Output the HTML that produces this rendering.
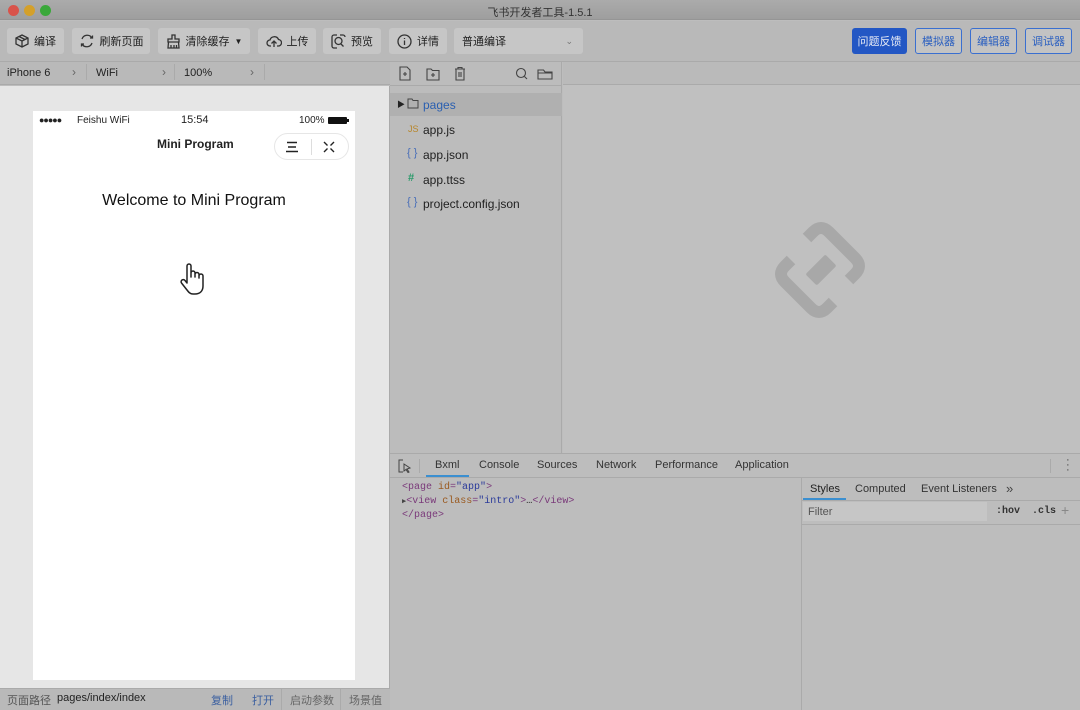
<!DOCTYPE html>
<html><head><meta charset="utf-8"><style>
*{box-sizing:border-box;margin:0;padding:0}
body{width:1080px;height:710px;overflow:hidden;background:#bdbdbd;font-family:"Liberation Sans","Noto Sans CJK SC",sans-serif;font-size:11px;color:#222;position:relative}
.a{position:absolute;white-space:nowrap}
.btn{position:absolute;top:28px;height:26px;background:#c6c6c6;border-radius:3px;display:flex;align-items:center;justify-content:center;padding:0 4px;gap:5px;font-size:11px;color:#222;white-space:nowrap}
.rb{position:absolute;top:28px;height:26px;border:1px solid #3a6fd0;border-radius:3px;color:#2a5fc0;background:#c3c3c3;font-size:11px;display:flex;align-items:center;justify-content:center;white-space:nowrap}
.ic{stroke:#333;fill:none;stroke-width:1.3;flex:none}
.tab{position:absolute;top:459px;font-size:11px;color:#333}
.file{position:absolute;left:408px;font-size:12px;color:#222}
</style></head><body>
<div class="a" style="left:0;top:0;width:1080px;height:20px;background:linear-gradient(#ababab,#9e9e9e);border-bottom:1px solid #959595"></div>
<div class="a" style="left:8px;top:5px;width:11px;height:11px;border-radius:50%;background:#d9534a"></div>
<div class="a" style="left:24px;top:5px;width:11px;height:11px;border-radius:50%;background:#d4a02a"></div>
<div class="a" style="left:40px;top:5px;width:11px;height:11px;border-radius:50%;background:#3aa83a"></div>
<div class="a" style="left:0;width:1080px;top:4px;text-align:center;font-size:11px;color:#333">飞书开发者工具-1.5.1</div>
<div class="a" style="left:0;top:21px;width:1080px;height:41px;background:#b9b9b9;border-bottom:1px solid #aaa"></div>
<div class="btn" style="left:7px;width:57px"><svg width="14" height="14" class="ic"><path d="M7 1L13 4V10L7 13L1 10V4Z M1 4L7 7L13 4 M7 7V13 M4 2.5L10 5.5"/></svg>编译</div>
<div class="btn" style="left:72px;width:78px"><svg width="16" height="16" class="ic"><path d="M3 6A5.5 5.5 0 0 1 13 5 M13 10A5.5 5.5 0 0 1 3 11 M11 5H13.5V2.5 M5 11H2.5V13.5"/></svg>刷新页面</div>
<div class="btn" style="left:158px;width:92px"><svg width="15" height="15" class="ic"><path d="M6 1H9V5H13V8H2V5H6Z M2.5 8L2 14H13L12.5 8 M5 11V14 M8 11V14 M10.5 11V14"/></svg>清除缓存 <span style="font-size:8px">▼</span></div>
<div class="btn" style="left:258px;width:58px"><svg width="16" height="14" class="ic"><path d="M5 12H4A3 3 0 0 1 4 6A4.5 4.5 0 0 1 12.5 5.5A3 3 0 0 1 12 12H11 M8 13V7 M5.5 9.5L8 7L10.5 9.5"/></svg>上传</div>
<div class="btn" style="left:323px;width:58px"><svg width="15" height="15" class="ic"><path d="M6 1H3A2 2 0 0 0 1 3V12A2 2 0 0 0 3 14H6 M9 1H12A2 2 0 0 1 14 3 M7.5 10.5A3.5 3.5 0 1 0 7.5 3.5A3.5 3.5 0 0 0 7.5 10.5 M10 10L12.5 12.5"/></svg>预览</div>
<div class="btn" style="left:389px;width:58px"><svg width="15" height="15" class="ic"><circle cx="7.5" cy="7.5" r="6.5"/><path d="M7.5 6.5V11 M7.5 4V5"/></svg>详情</div>
<div class="btn" style="left:454px;width:129px;justify-content:space-between;padding:0 10px 0 8px">普通编译<span style="color:#777;font-size:9px">⌄</span></div>
<div class="a" style="left:852px;top:28px;width:55px;height:26px;background:#2357c4;border-radius:3px;color:#e8ecf5;font-size:11px;display:flex;align-items:center;justify-content:center">问题反馈</div>
<div class="rb" style="left:915px;width:47px">模拟器</div>
<div class="rb" style="left:970px;width:47px">编辑器</div>
<div class="rb" style="left:1025px;width:47px">调试器</div>
<div class="a" style="left:0;top:62px;width:390px;height:23px;background:#b9b9b9;border-bottom:1px solid #aaa"></div>
<div class="a" style="left:7px;top:67px;font-size:11px">iPhone 6</div>
<div class="a" style="left:72px;top:65px;color:#666;font-size:12px">›</div>
<div class="a" style="left:86px;top:64px;width:1px;height:16px;background:#aaa"></div>
<div class="a" style="left:96px;top:67px">WiFi</div>
<div class="a" style="left:162px;top:65px;color:#666;font-size:12px">›</div>
<div class="a" style="left:174px;top:64px;width:1px;height:16px;background:#aaa"></div>
<div class="a" style="left:184px;top:67px">100%</div>
<div class="a" style="left:250px;top:65px;color:#666;font-size:12px">›</div>
<div class="a" style="left:264px;top:64px;width:1px;height:16px;background:#aaa"></div>
<div class="a" style="left:0;top:86px;width:390px;height:602px;background:#e6e6e6;border-right:1px solid #aaa"></div>
<div class="a" style="left:33px;top:111px;width:322px;height:569px;background:#fff"></div>
<div class="a" style="left:39px;top:115px;font-size:9px;letter-spacing:-1px">●●●●●</div>
<div class="a" style="left:77px;top:115px;font-size:10px">Feishu WiFi</div>
<div class="a" style="left:181px;top:114px;font-size:11px">15:54</div>
<div class="a" style="left:299px;top:115px;font-size:10px">100%</div>
<div class="a" style="left:328px;top:117px;width:19px;height:7px;background:#111;border-radius:1px"></div>
<div class="a" style="left:347px;top:119px;width:2px;height:3px;background:#111"></div>
<div class="a" style="left:157px;top:137px;font-size:12px;font-weight:bold">Mini Program</div>
<div class="a" style="left:274px;top:133px;width:75px;height:27px;border:1px solid #e6e6e6;border-radius:14px"></div>
<div class="a" style="left:311px;top:139px;width:1px;height:16px;background:#ddd"></div>
<svg class="a" style="left:285px;top:141px" width="14" height="12"><path d="M2 1.5H12M3 6H11M1 10.5H13" stroke="#222" stroke-width="1.4"/></svg>
<svg class="a" style="left:322px;top:140px" width="14" height="14"><path d="M2 2L5.5 5.5M12 2L8.5 5.5M2 12L5.5 8.5M12 12L8.5 8.5" stroke="#222" stroke-width="1.4"/></svg>
<div class="a" style="left:33px;width:322px;top:192px;text-align:center;font-size:16px;color:#111">Welcome to Mini Program</div>
<svg class="a" style="left:178px;top:262px" width="36" height="36"><path d="M9 4A2 2 0 0 1 13 4V15V11A2 2 0 0 1 17 11V15V12.5A2 2 0 0 1 21 12.5V16V14A2 2 0 0 1 25 14V24C25 29 22 32 17 32H15C12 32 10.5 30 9 28L3.5 21A2 2 0 0 1 7 18.5L9 21Z" fill="#fff" stroke="#222" stroke-width="1.5" stroke-linejoin="round"/></svg>
<div class="a" style="left:0;top:688px;width:390px;height:22px;background:#b9b9b9;border-top:1px solid #aaa"></div>
<div class="a" style="left:7px;top:692px;color:#555">页面路径</div>
<div class="a" style="left:57px;top:692px;color:#222">pages/index/index</div>
<div class="a" style="left:211px;top:692px;color:#3a5fa0">复制</div>
<div class="a" style="left:252px;top:692px;color:#3a5fa0">打开</div>
<div class="a" style="left:281px;top:689px;width:1px;height:21px;background:#aaa"></div>
<div class="a" style="left:290px;top:692px;color:#666">启动参数</div>
<div class="a" style="left:340px;top:689px;width:1px;height:21px;background:#aaa"></div>
<div class="a" style="left:349px;top:692px;color:#666">场景值</div>
<div class="a" style="left:390px;top:62px;width:172px;height:391px;background:#bcbcbc;border-right:1px solid #aaa"></div>
<div class="a" style="left:390px;top:85px;width:172px;height:1px;background:#aaa"></div>
<svg class="a" style="left:398px;top:66px" width="160" height="16" fill="none" stroke="#444" stroke-width="1.1">
<path d="M2 1H9L12 4V14H2Z M7 6V10M5 8H9"/>
<path d="M29 3H33L34.5 4.5H41V14H29Z M35 7V11M33 9H37"/>
<path d="M57 3H67M60 3V1.5H64V3 M58 3.5V14H66V3.5 M61 6V11M63 6V11"/>
<circle cx="123" cy="7" r="4.5"/><path d="M126.5 10.5L129 13"/>
<path d="M140 4V13H154V6H147L145.5 4Z M140 7H154"/>
</svg>
<div class="a" style="left:390px;top:93px;width:172px;height:23px;background:#b0b0b0"></div>
<div class="a" style="left:397px;top:99px;font-size:8px;color:#222">▶</div>
<svg class="a" style="left:407px;top:98px" width="12" height="11"><path d="M1 1H5L6 2.5H11V10H1Z" fill="none" stroke="#444"/></svg>
<div class="a" style="left:423px;top:98px;font-size:12px;color:#2a5fb0">pages</div>
<div class="a" style="left:408px;top:124px;font-size:9px;color:#b8862a">JS</div><div class="file" style="left:423px;top:123px">app.js</div>
<div class="a" style="left:407px;top:147px;font-size:11px;color:#4a6fb8">{ }</div><div class="file" style="left:423px;top:148px">app.json</div>
<div class="a" style="left:408px;top:172px;font-size:11px;color:#2a9a6a;font-weight:bold">#</div><div class="file" style="left:423px;top:173px">app.ttss</div>
<div class="a" style="left:407px;top:196px;font-size:11px;color:#4a6fb8">{ }</div><div class="file" style="left:423px;top:197px">project.config.json</div>
<div class="a" style="left:563px;top:62px;width:517px;height:391px;background:#c0c0c0"></div>
<div class="a" style="left:563px;top:62px;width:517px;height:23px;background:#bababa;border-bottom:1px solid #aaa"></div>
<svg class="a" style="left:769px;top:218px" width="104" height="104" viewBox="0 0 104 104">
<g fill="none" stroke="#a8a8a8" stroke-width="12" stroke-linecap="butt" stroke-linejoin="round">
<path d="M38 20L44 14Q52 6 60 14L86 40Q94 48 86 56L80 62"/>
<path d="M64 84L58 90Q50 98 42 90L16 64Q8 56 16 48L22 42"/>
</g>
<rect x="38" y="44" width="28" height="16" rx="2" transform="rotate(-45 52 52)" fill="#a8a8a8"/>
</svg>
<div class="a" style="left:390px;top:453px;width:690px;height:257px;background:#bdbdbd;border-top:1px solid #aaa"></div>
<div class="a" style="left:390px;top:477px;width:690px;height:1px;background:#aaa"></div>
<svg class="a" style="left:398px;top:459px" width="14" height="14" fill="none" stroke="#444"><path d="M5 1H1V13H5 M6 5L12 9L9 10L11 13L10 13.5L8 10.5L6 12Z"/></svg>
<div class="a" style="left:419px;top:459px;width:1px;height:14px;background:#aaa"></div>
<div class="tab" style="left:435px">Bxml</div>
<div class="a" style="left:426px;top:475px;width:43px;height:2px;background:#3b8fd0"></div>
<div class="tab" style="left:479px">Console</div>
<div class="tab" style="left:537px">Sources</div>
<div class="tab" style="left:596px">Network</div>
<div class="tab" style="left:655px">Performance</div>
<div class="tab" style="left:735px">Application</div>
<div class="a" style="left:1050px;top:459px;width:1px;height:14px;background:#aaa"></div>
<div class="a" style="left:1066px;top:458px;font-size:11px;line-height:5px;color:#444">·<br>·<br>·</div>
<div class="a" style="left:402px;top:481px;font-family:'Liberation Mono',monospace;font-size:10px;line-height:14px;color:#7a3a7a">
&lt;page <span style="color:#9a5a20">id</span>=<span style="color:#2a3a9a">"app"</span>&gt;<br>
<span style="color:#444;font-size:7px">▶</span>&lt;view <span style="color:#9a5a20">class</span>=<span style="color:#2a3a9a">"intro"</span>&gt;<span style="color:#222">…</span>&lt;/view&gt;<br>
&lt;/page&gt;</div>
<div class="a" style="left:801px;top:478px;width:1px;height:232px;background:#aaa"></div>
<div class="a" style="left:802px;top:478px;width:278px;height:23px;border-bottom:1px solid #aaa"></div>
<div class="a" style="left:810px;top:483px;color:#222">Styles</div>
<div class="a" style="left:803px;top:498px;width:43px;height:2px;background:#3b8fd0"></div>
<div class="a" style="left:855px;top:483px;color:#333">Computed</div>
<div class="a" style="left:921px;top:483px;color:#333">Event Listeners</div>
<div class="a" style="left:1006px;top:481px;color:#444;font-size:13px">»</div>
<div class="a" style="left:803px;top:502px;width:184px;height:19px;background:#c6c6c6"></div>
<div class="a" style="left:808px;top:506px;color:#555">Filter</div>
<div class="a" style="left:996px;top:506px;font-family:'Liberation Mono',monospace;font-size:10px;font-weight:bold;color:#333">:hov &nbsp;.cls</div>
<div class="a" style="left:1061px;top:502px;font-size:14px;color:#888">+</div>
<div class="a" style="left:802px;top:524px;width:278px;height:1px;background:#aaa"></div>
</body></html>
